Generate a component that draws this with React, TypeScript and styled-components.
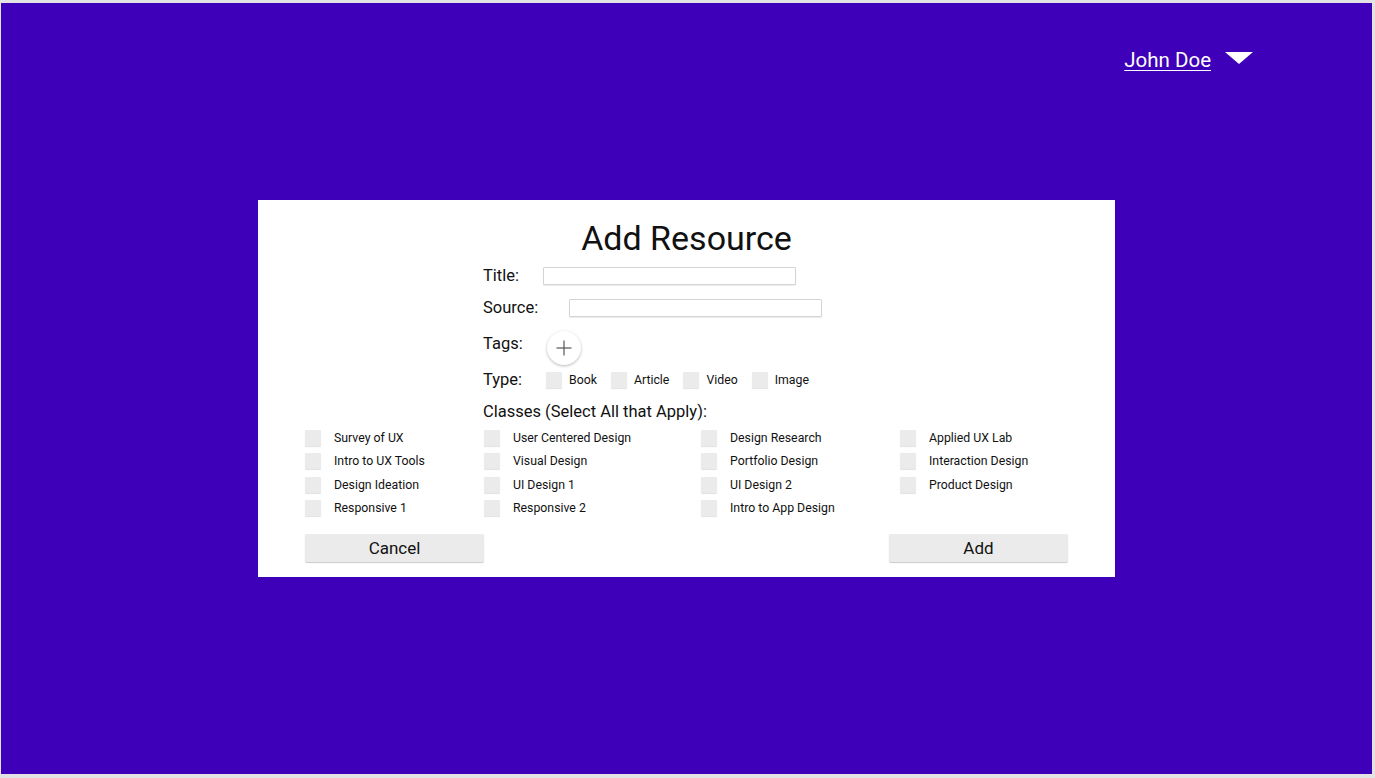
import styled, { createGlobalStyle } from "styled-components"

const GlobalStyle = createGlobalStyle`
  body {
    margin: 0;
    font-family: Roboto, "Liberation Sans", Arial, sans-serif;
  }
`

const typeOptions = ["Book", "Article", "Video", "Image"]

const classes = [
  "Survey of UX", "User Centered Design", "Design Research", "Applied UX Lab",
  "Intro to UX Tools", "Visual Design", "Portfolio Design", "Interaction Design",
  "Design Ideation", "UI Design 1", "UI Design 2", "Product Design",
  "Responsive 1", "Responsive 2", "Intro to App Design",
]

const App = () => {
  return (
    <Frame>
      <GlobalStyle />
      <Screen>
        <Header>
          <UserName href="#">John Doe</UserName>
          <Caret width="28" height="12" viewBox="0 0 28 12">
            <polygon points="0,0 28,0 14,12" fill="#fff" />
          </Caret>
        </Header>

        <Card>
          <Heading>Add Resource</Heading>
          <Form>
            <FieldRow $mt={9}>
              <Label $w={60}>Title:</Label>
              <TextBox type="text" />
            </FieldRow>
            <FieldRow $mt={14}>
              <Label $w={86}>Source:</Label>
              <TextBox type="text" />
            </FieldRow>
            <FieldRow $mt={14} $top>
              <Label $w={64} $pt={4}>Tags:</Label>
              <AddTag type="button" aria-label="Add tag">
                <svg width="16" height="16" viewBox="0 0 16 16">
                  <line x1="8" y1="0.5" x2="8" y2="15.5" stroke="#555" strokeWidth="1.2" />
                  <line x1="0.5" y1="8" x2="15.5" y2="8" stroke="#555" strokeWidth="1.2" />
                </svg>
              </AddTag>
            </FieldRow>
            <FieldRow $mt={6}>
              <Label $w={63}>Type:</Label>
              <TypeList>
                {typeOptions.map((t) => (
                  <TypeOption key={t}>
                    <Check type="checkbox" />
                    {t}
                  </TypeOption>
                ))}
              </TypeList>
            </FieldRow>
            <FieldRow $mt={14}>
              <Label>Classes (Select All that Apply):</Label>
            </FieldRow>
          </Form>

          <ClassGrid>
            {classes.map((c) => (
              <ClassItem key={c}>
                <Check type="checkbox" />
                {c}
              </ClassItem>
            ))}
          </ClassGrid>

          <Footer>
            <Button type="button">Cancel</Button>
            <Button type="button">Add</Button>
          </Footer>
        </Card>
      </Screen>
    </Frame>
  )
}

export default App

const Frame = styled.div`
  width: 1375px;
  height: 778px;
  box-sizing: border-box;
  padding: 3px 3px 4px 1px;
  background: #e3e3e3;
`
const Screen = styled.div`
  height: 100%;
  background: #3e00b8;
  display: flex;
  flex-direction: column;
`
const Header = styled.div`
  display: flex;
  justify-content: flex-end;
  align-items: center;
  gap: 14px;
  padding: 45px 119px 0 0;
`
const UserName = styled.a`
  color: #fff;
  font-size: 20.5px;
  line-height: 25px;
  text-decoration: underline;
  text-underline-offset: 3px;
  text-decoration-thickness: 1px;
`
const Caret = styled.svg`
  display: block;
  margin-top: -5px;
`
const Card = styled.div`
  margin: 127px 0 0 257px;
  width: 857px;
  height: 377px;
  box-sizing: border-box;
  padding: 18px 47px 15px;
  background: #fff;
  display: flex;
  flex-direction: column;
`
const Heading = styled.h1`
  margin: 0;
  text-align: center;
  font-size: 34px;
  line-height: 40px;
  font-weight: 400;
  color: #111;
`
const Form = styled.div`
  display: flex;
  flex-direction: column;
  margin-left: 178px;
`
const FieldRow = styled.div<{ $mt: number; $top?: boolean }>`
  display: flex;
  align-items: ${(p) => (p.$top ? "flex-start" : "center")};
  margin-top: ${(p) => p.$mt}px;
`
const Label = styled.span<{ $w?: number; $pt?: number }>`
  width: ${(p) => (p.$w ? `${p.$w}px` : "auto")};
  padding-top: ${(p) => p.$pt || 0}px;
  flex-shrink: 0;
  font-size: 16.5px;
  line-height: 18px;
  color: #111;
`
const TextBox = styled.input`
  width: 253px;
  height: 18px;
  box-sizing: border-box;
  margin: 0;
  border: 1px solid #d4d4d4;
  border-radius: 1px;
  box-shadow: 0 1px 1px rgba(0, 0, 0, 0.08);
  background: #fff;
`
const AddTag = styled.button`
  width: 34px;
  height: 34px;
  padding: 0;
  border: none;
  border-radius: 50%;
  background: #fff;
  box-shadow: 0 1px 3px rgba(0, 0, 0, 0.28);
  display: flex;
  align-items: center;
  justify-content: center;
`
const TypeList = styled.div`
  display: flex;
  align-items: center;
  gap: 14px;
`
const TypeOption = styled.label`
  display: flex;
  align-items: center;
  gap: 7px;
  font-size: 12.3px;
  color: #111;
`
const Check = styled.input`
  appearance: none;
  margin: 0;
  width: 16px;
  height: 16px;
  flex-shrink: 0;
  background: #ebebeb;
  border-radius: 1px;
  box-shadow: 0 1px 1px rgba(0, 0, 0, 0.12);
`
const ClassGrid = styled.div`
  display: grid;
  grid-template-columns: 179px 217px 199px 1fr;
  grid-auto-rows: 16px;
  row-gap: 7.33px;
  margin-top: 9px;
`
const ClassItem = styled.label`
  display: flex;
  align-items: center;
  gap: 13px;
  font-size: 12.3px;
  color: #111;
`
const Footer = styled.div`
  display: flex;
  justify-content: space-between;
  margin-top: 18px;
`
const Button = styled.button`
  width: 179px;
  height: 28px;
  border: none;
  border-radius: 2px;
  background: #ebebeb;
  box-shadow: 0 1px 1px rgba(0, 0, 0, 0.22);
  font-family: Roboto, "Liberation Sans", Arial, sans-serif;
  font-size: 17px;
  color: #111;
`
